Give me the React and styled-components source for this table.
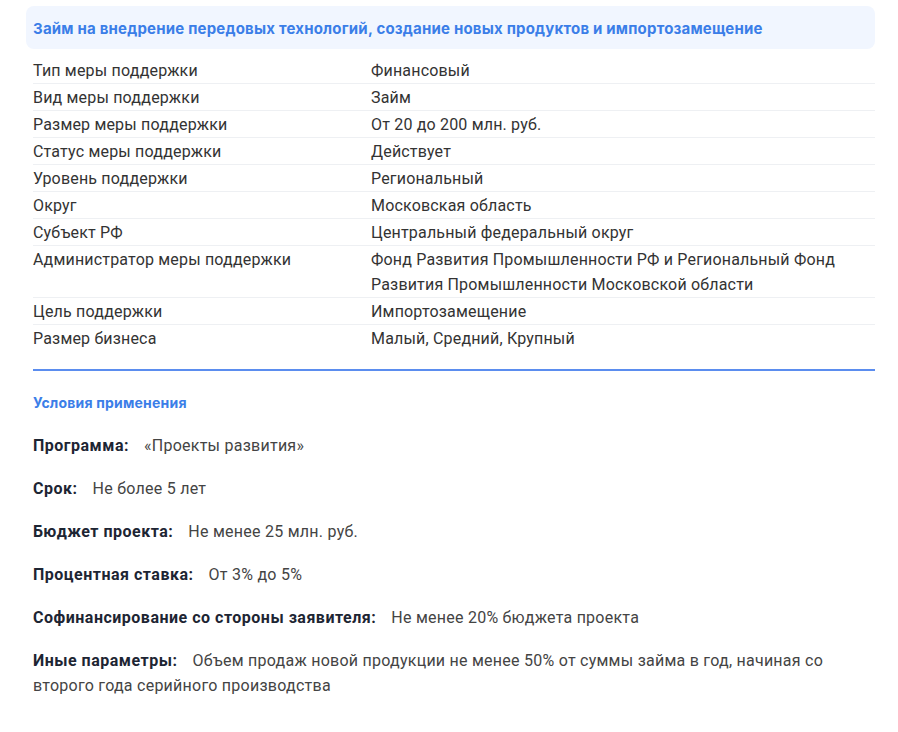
import React from "react";
import styled, { createGlobalStyle } from "styled-components";

const GlobalStyle = createGlobalStyle`
    body {
        margin: 0;
        background: #ffffff;
        font-family: "Roboto", "Liberation Sans", sans-serif;
    }
`;

const Page = styled.div`
    padding: 6px 23px 40px 26px;
`;

const Header = styled.div`
    background-color: #f1f6ff;
    border-radius: 8px;
    padding: 12px 7px 10px 7px;
    margin-bottom: 8px;
`;

const Title = styled.h2`
    margin: 0;
    font-family: "Inter", "Roboto", sans-serif;
    font-size: 15px;
    font-weight: 700;
    line-height: 21px;
    letter-spacing: 0.2px;
    color: #3b7ee8;
`;

const Table = styled.div`
    padding-left: 7px;
`;

const Row = styled.div`
    display: grid;
    grid-template-columns: 338px 1fr;
    padding-top: 1px;
    border-bottom: 1px solid ${(p) => (p.$last ? "transparent" : "#eef0f3")};
`;

const Cell = styled.div`
    font-size: 16px;
    line-height: 25px;
    letter-spacing: 0.18px;
    color: #333;
    padding-right: 30px;
`;

const Divider = styled.div`
    height: 2px;
    background-color: #5b8def;
    margin: 17px 0 0 7px;
`;

const Section = styled.div`
    padding: 22px 0 0 7px;
`;

const SectionTitle = styled.h3`
    margin: 0 0 20px;
    font-family: "Inter", "Roboto", sans-serif;
    font-size: 14px;
    font-weight: 700;
    line-height: 20px;
    letter-spacing: 0.2px;
    color: #3b7ee8;
`;

const Param = styled.p`
    margin: 0 0 18px;
    font-size: 16px;
    line-height: 25px;
    letter-spacing: 0.25px;
    color: #444;
`;

const Label = styled.b`
    font-weight: 700;
    letter-spacing: 0.5px;
    color: #1d2533;
    margin-right: 15px;
`;

const rows = [
    ["Тип меры поддержки", "Финансовый"],
    ["Вид меры поддержки", "Займ"],
    ["Размер меры поддержки", "От 20 до 200 млн. руб."],
    ["Статус меры поддержки", "Действует"],
    ["Уровень поддержки", "Региональный"],
    ["Округ", "Московская область"],
    ["Субъект РФ", "Центральный федеральный округ"],
    ["Администратор меры поддержки", "Фонд Развития Промышленности РФ и Региональный Фонд Развития Промышленности Московской области"],
    ["Цель поддержки", "Импортозамещение"],
    ["Размер бизнеса", "Малый, Средний, Крупный"],
];

const params = [
    ["Программа:", "«Проекты развития»"],
    ["Срок:", "Не более 5 лет"],
    ["Бюджет проекта:", "Не менее 25 млн. руб."],
    ["Процентная ставка:", "От 3% до 5%"],
    ["Софинансирование со стороны заявителя:", "Не менее 20% бюджета проекта"],
    ["Иные параметры:", "Объем продаж новой продукции не менее 50% от суммы займа в год, начиная со второго года серийного производства"],
];

export default function App() {
    return (
        <Page>
            <GlobalStyle />
            <Header>
                <Title>Займ на внедрение передовых технологий, создание новых продуктов и импортозамещение</Title>
            </Header>
            <Table>
                {rows.map(([k, v], i) => (
                    <Row key={k} $last={i === rows.length - 1}>
                        <Cell>{k}</Cell>
                        <Cell>{v}</Cell>
                    </Row>
                ))}
            </Table>
            <Divider />
            <Section>
                <SectionTitle>Условия применения</SectionTitle>
                {params.map(([k, v]) => (
                    <Param key={k}>
                        <Label>{k}</Label>
                        {v}
                    </Param>
                ))}
            </Section>
        </Page>
    );
}
